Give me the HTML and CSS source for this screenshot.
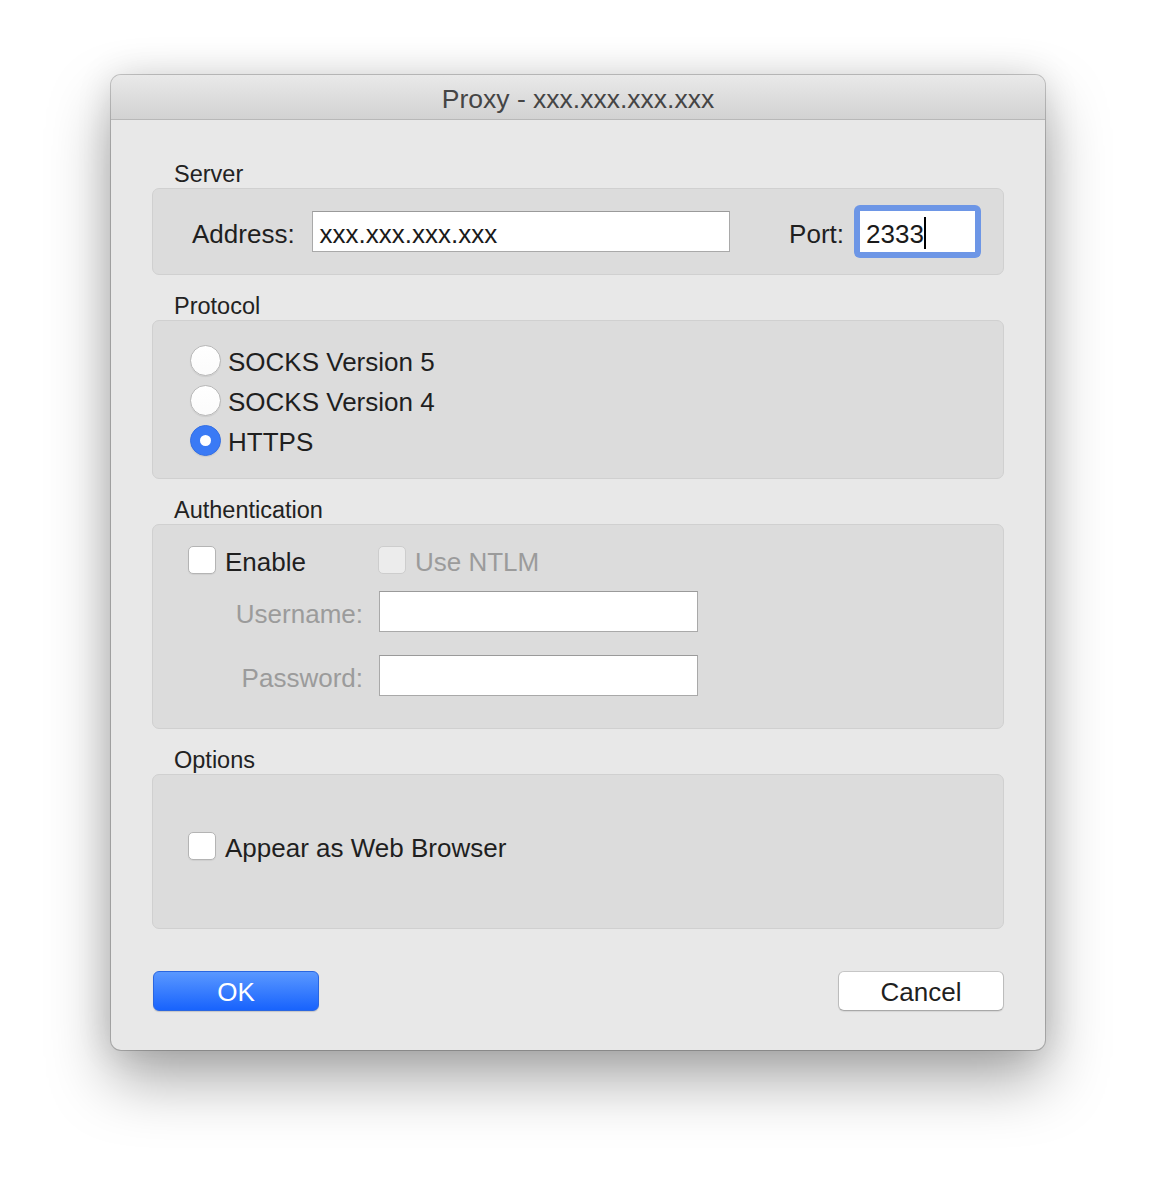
FILE: index.html
```html
<!DOCTYPE html>
<html>
<head>
<meta charset="utf-8">
<link rel="stylesheet" href="styles.css">
</head>
<body>
<div class="window">
  <div class="titlebar">Proxy - xxx.xxx.xxx.xxx</div>
  <div class="content">
    <section class="group">
      <div class="group-label">Server</div>
      <div class="box box-server">
        <span class="lbl lbl-address">Address:</span>
        <div class="field field-address">xxx.xxx.xxx.xxx</div>
        <span class="spacer"></span>
        <span class="lbl lbl-port">Port:</span>
        <div class="focus-ring"><div class="field field-port">2333<span class="caret"></span></div></div>
      </div>
    </section>

    <section class="group">
      <div class="group-label">Protocol</div>
      <div class="box box-protocol">
        <div class="radio-row"><span class="radio"></span><span class="lbl">SOCKS Version 5</span></div>
        <div class="radio-row"><span class="radio"></span><span class="lbl">SOCKS Version 4</span></div>
        <div class="radio-row"><span class="radio on"></span><span class="lbl">HTTPS</span></div>
      </div>
    </section>

    <section class="group">
      <div class="group-label">Authentication</div>
      <div class="box box-auth">
        <div class="auth-row auth-checks">
          <div class="check-row enable"><span class="checkbox"></span><span class="lbl">Enable</span></div>
          <div class="check-row ntlm"><span class="checkbox disabled"></span><span class="lbl dim">Use NTLM</span></div>
        </div>
        <div class="auth-row auth-user">
          <span class="lbl dim auth-label">Username:</span>
          <div class="field field-auth"></div>
        </div>
        <div class="auth-row auth-pass">
          <span class="lbl dim auth-label">Password:</span>
          <div class="field field-auth"></div>
        </div>
      </div>
    </section>

    <section class="group">
      <div class="group-label">Options</div>
      <div class="box box-options">
        <div class="check-row"><span class="checkbox"></span><span class="lbl">Appear as Web Browser</span></div>
      </div>
    </section>

    <div class="buttons">
      <button class="btn btn-ok">OK</button>
      <button class="btn btn-cancel">Cancel</button>
    </div>
  </div>
</div>
</body>
</html>
```

FILE: styles.css
```css
* { box-sizing: border-box; }

html, body {
  margin: 0;
  padding: 0;
  background: #ffffff;
}

html { min-height: 1198px; }

body {
  min-height: 1198px;
  padding: 75px 0 0 111px;
  font-family: "Liberation Sans", Arial, sans-serif;
  color: #1f1f1f;
}

.window {
  width: 934px;
  height: 975px;
  background: #e8e8e8;
  border-radius: 10px;
  box-shadow: 0 0 0 1px rgba(0,0,0,0.20), 0 30px 62px rgba(0,0,0,0.34), 0 0 36px rgba(0,0,0,0.12);
  overflow: hidden;
  display: flex;
  flex-direction: column;
}

.titlebar {
  height: 45px;
  flex: none;
  background: linear-gradient(#e9e9e9, #d2d2d2);
  border-bottom: 1px solid #b8b8b8;
  display: flex;
  align-items: center;
  justify-content: center;
  font-size: 26.5px;
  color: #454545;
  padding-top: 4px;
}

.content {
  padding: 40px 41px 0 41px;
  display: flex;
  flex-direction: column;
}

.group + .group { margin-top: 17px; }

.group-label {
  height: 28px;
  line-height: 28px;
  padding-left: 22px;
  font-size: 23.5px;
  color: #222;
}

.box {
  background: #dcdcdc;
  border: 1px solid #d0d0d0;
  border-radius: 7px;
}

.lbl {
  font-size: 26px;
  color: #1f1f1f;
  white-space: nowrap;
  padding-top: 4px;
}

.dim { color: #9b9b9b; }

/* Server */
.box-server {
  height: 87px;
  display: flex;
  align-items: center;
  padding: 0 22px 0 39px;
}

.lbl-address { margin-right: 17px; padding-top: 6px; }

.field {
  background: #ffffff;
  border: 1px solid #a9a9a9;
  border-top-color: #9a9a9a;
  height: 41px;
  font-size: 26px;
  color: #1a1a1a;
  display: flex;
  align-items: center;
  padding-top: 6px;
}

.field-address {
  width: 418px;
  padding-left: 7px;
}

.spacer { flex: 1; }

.lbl-port { margin-right: 10px; padding-top: 6px; }

.focus-ring {
  width: 127px;
  height: 53px;
  border-radius: 6px;
  background: #6d96e6;
  padding: 6px;
  display: flex;
}

.field-port {
  flex: 1;
  height: 41px;
  border: none;
  padding-left: 6px;
}

.caret {
  display: inline-block;
  width: 2px;
  height: 32px;
  background: #000;
  margin-top: -4px;
}

/* Protocol */
.box-protocol {
  height: 159px;
  padding: 19px 0 18px 37px;
  display: flex;
  flex-direction: column;
}

.radio-row {
  height: 40px;
  display: flex;
  align-items: center;
  gap: 7px;
}

.radio {
  width: 31px;
  height: 31px;
  border-radius: 50%;
  background: linear-gradient(#ffffff, #fbfbfb);
  border: 1px solid #b8b8b8;
  box-shadow: 0 1px 1px rgba(0,0,0,0.08);
  display: flex;
  align-items: center;
  justify-content: center;
  flex: none;
}

.radio.on {
  background: #3a7af5;
  border-color: #3570e4;
}

.radio.on::after {
  content: "";
  width: 11px;
  height: 11px;
  border-radius: 50%;
  background: #ffffff;
}

/* Auth */
.box-auth {
  height: 205px;
  padding: 21px 0 0 35px;
  display: flex;
  flex-direction: column;
}

.auth-row {
  display: flex;
  align-items: center;
}

.auth-checks { height: 28px; }

.enable { width: 190px; }

.ntlm { margin-left: 0; }

.auth-user { margin-top: 17px; }
.auth-pass { margin-top: 23px; }

.auth-label {
  width: 175px;
  text-align: right;
  margin-right: 16px;
  padding-top: 6px;
}

.field-auth { width: 319px; }

.check-row {
  display: flex;
  align-items: center;
  gap: 9px;
  height: 28px;
}

.checkbox {
  width: 28px;
  height: 28px;
  border-radius: 5px;
  background: #ffffff;
  border: 1px solid #b4b4b4;
  box-shadow: 0 1px 1px rgba(0,0,0,0.06);
  flex: none;
}

.checkbox.disabled {
  background: #ececec;
  border-color: #cdcdcd;
  box-shadow: none;
}

/* Options */
.box-options {
  height: 155px;
  padding: 57px 0 0 35px;
}

/* Buttons */
.buttons {
  margin-top: 42px;
  display: flex;
  justify-content: space-between;
  padding-left: 1px;
}

.btn {
  width: 166px;
  height: 40px;
  border-radius: 6px;
  font-family: "Liberation Sans", Arial, sans-serif;
  font-size: 26px;
  padding: 2px 0 0 0;
  cursor: default;
}

.btn-ok {
  background: linear-gradient(#5a98ff, #1863fd);
  border: 1px solid #2a66e0;
  color: #ffffff;
  box-shadow: 0 1px 1px rgba(0,0,0,0.15);
}

.btn-cancel {
  background: #ffffff;
  border: 1px solid #bcbcbc;
  border-top-color: #c6c6c6;
  border-bottom-color: #a8a8a8;
  color: #1f1f1f;
  box-shadow: 0 1px 1px rgba(0,0,0,0.08);
}
```
